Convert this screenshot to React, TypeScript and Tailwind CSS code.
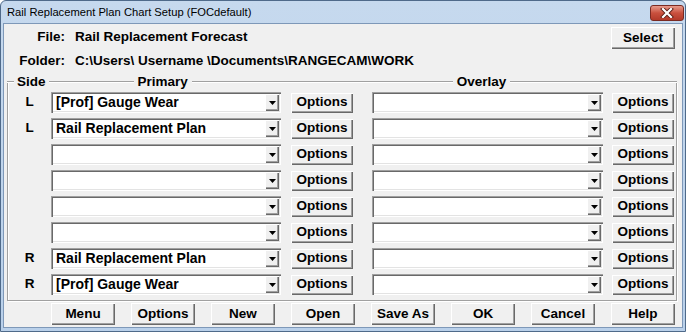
import React from "react";

const rows = [
  { side: "L", primary: "[Prof] Gauge Wear" },
  { side: "L", primary: "Rail Replacement Plan" },
  { side: "", primary: "" },
  { side: "", primary: "" },
  { side: "", primary: "" },
  { side: "", primary: "" },
  { side: "R", primary: "Rail Replacement Plan" },
  { side: "R", primary: "[Prof] Gauge Wear" },
];

const bottomButtons = ["Menu", "Options", "New", "Open", "Save As", "OK", "Cancel", "Help"];

const raised =
  "bg-[#f0f0f0] shadow-[inset_1px_1px_0_#ffffff,inset_-1px_-1px_0_#696969,inset_-2px_-2px_0_#a0a0a0]";

const Button = ({ label, w = "w-[64px]", h = "h-[22px]" }: { label: string; w?: string; h?: string }) => (
  <div className={`${raised} ${w} ${h} flex items-center justify-center text-[13.5px] font-bold text-black shrink-0`}>
    {label}
  </div>
);

const Combo = ({ value, w }: { value: string; w: string }) => (
  <div
    className={`${w} h-[21px] shrink-0 flex items-center bg-white pl-[5px] pr-[2px] shadow-[inset_1px_1px_0_#a0a0a0,inset_2px_2px_0_#696969,inset_-1px_-1px_0_#ffffff,inset_-2px_-2px_0_#e3e3e3]`}
  >
    <span className="flex-1 text-[14px] font-bold text-black whitespace-nowrap">{value}</span>
    <div className={`${raised} w-[14px] h-[17px] flex items-center justify-center`}>
      <svg width="7" height="4" viewBox="0 0 7 4">
        <polygon points="0,0 7,0 3.5,4" fill="#000" />
      </svg>
    </div>
  </div>
);

const Etch = ({ className }: { className: string }) => (
  <div className={`h-[2px] border-t border-[#a0a0a0] border-b border-b-white ${className}`} />
);

export default function App() {
  return (
    <div
      className="w-[686px] h-[332px] flex flex-col border border-[#4f6a8a] rounded-t-[6px] bg-gradient-to-b from-[#c6d9ee] to-[#b9d0ea] overflow-hidden"
      style={{ fontFamily: '"Liberation Sans", Arial, sans-serif' }}
    >
      {/* title bar */}
      <div className="h-[22px] shrink-0 flex items-center justify-between pl-[6px] pr-[1px]">
        <span className="text-[11.2px] text-black">Rail Replacement Plan Chart Setup (FOCdefault)</span>
        <div className="w-[34px] h-[16px] mt-[1px] rounded-[3px] border border-[#7a2a22] bg-gradient-to-b from-[#e69a8c] via-[#c9503e] to-[#b33a2a] flex items-center justify-center">
          <svg width="14" height="10" viewBox="0 0 14 10">
            <path d="M3 1 L11 9 M11 1 L3 9" stroke="#5a1e16" strokeWidth="4" strokeLinecap="square" />
            <path d="M3 1 L11 9 M11 1 L3 9" stroke="#ffffff" strokeWidth="2.2" strokeLinecap="square" />
          </svg>
        </div>
      </div>

      {/* client */}
      <div className="flex-1 mx-[2px] mb-[3px] border border-[#7e98b8] bg-[#f0f0f0] flex flex-col text-black">
        <div className="h-[51px] shrink-0 flex">
          <div className="pt-[3px] grid grid-cols-[61px_auto] gap-x-[10px] text-[13.5px] font-bold">
            <div className="h-[20px] flex items-center justify-end">File:</div>
            <div className="h-[20px] flex items-center">Rail Replacement Forecast</div>
            <div className="h-[20px] flex items-center justify-end">Folder:</div>
            <div className="h-[20px] flex items-center">C:\Users\ Username \Documents\RANGECAM\WORK</div>
          </div>
          <div className="ml-auto mt-[3px] mr-[7px]">
            <Button label="Select" />
          </div>
        </div>

        {/* group box */}
        <div className="mt-[7px] mx-[3px] mr-[5px] border-l border-r border-b border-[#a0a0a0] shadow-[inset_1px_0_0_#ffffff,1px_1px_0_#ffffff]">
          <div className="-mt-[7px] -mx-px h-[14px] flex items-center text-[13.5px] font-bold">
            <Etch className="w-[7px]" />
            <span className="px-[3px]">Side</span>
            <Etch className="w-[85px]" />
            <span className="px-[4px]">Primary</span>
            <Etch className="w-[261px]" />
            <span className="px-[4px]">Overlay</span>
            <Etch className="flex-1" />
          </div>
          <div className="pt-[3px] pb-[5px] flex flex-col gap-[5px]">
            {rows.map((r, i) => (
              <div key={i} className="flex items-center">
                <div className="w-[43px] text-center text-[13.5px] font-bold">{r.side}</div>
                <Combo value={r.primary} w="w-[230px]" />
                <div className="ml-[10px]">
                  <Button label="Options" w="w-[62px]" h="h-[20px]" />
                </div>
                <div className="ml-[19px]">
                  <Combo value="" w="w-[231px]" />
                </div>
                <div className="ml-[9px]">
                  <Button label="Options" w="w-[62px]" h="h-[20px]" />
                </div>
              </div>
            ))}
          </div>
        </div>

        <div className="mt-[2px] pl-[47px] flex gap-[16px]">
          {bottomButtons.map((b) => (
            <Button key={b} label={b} />
          ))}
        </div>
      </div>
    </div>
  );
}
